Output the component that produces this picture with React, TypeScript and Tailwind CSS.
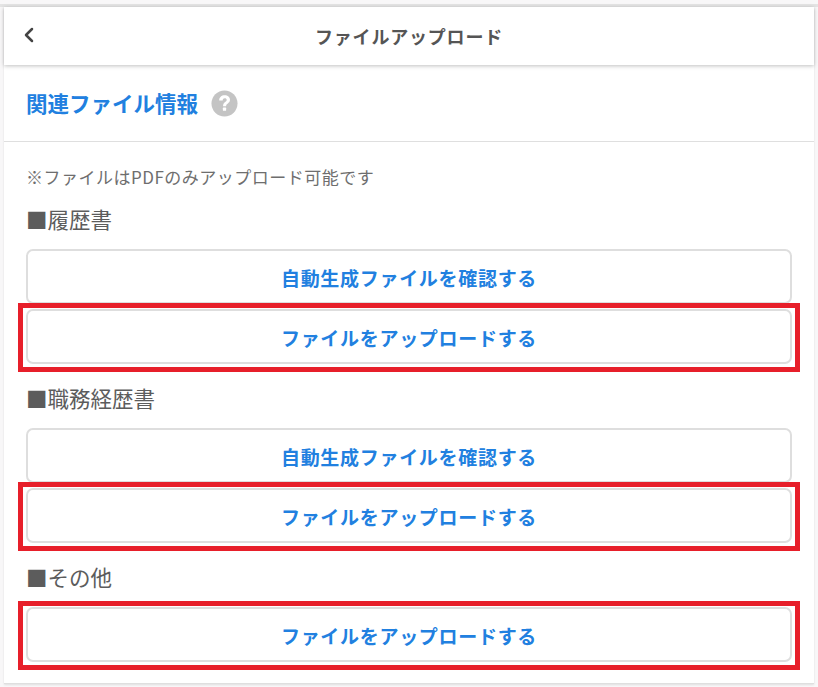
import { ChevronLeft } from "lucide-react";

const FONT = "font-['Noto_Sans_CJK_JP','Noto_Sans',sans-serif]";

function FileButton({ label }: { label: string }) {
  return (
    <button
      type="button"
      className="flex h-[55px] w-full items-center justify-center rounded-[7px] border-2 border-[#dedede] bg-white pt-[3px] text-[19px] font-bold tracking-[0.7px] text-[#2180e0]"
    >
      {label}
    </button>
  );
}

function UploadButton() {
  return (
    <div className="relative">
      <FileButton label="ファイルをアップロードする" />
      <div className="pointer-events-none absolute -inset-x-[8px] -top-[6px] -bottom-[8px] border-[5px] border-[#e71f2a]" />
    </div>
  );
}

function FileSection({ title, auto }: { title: string; auto: boolean }) {
  return (
    <section className="flex flex-col">
      <h3 className="mb-[16px] h-[28px] text-[21.5px] leading-[28px] font-normal text-[#5c5c5c]">■{title}</h3>
      {auto && (
        <div className="mb-[5px]">
          <FileButton label="自動生成ファイルを確認する" />
        </div>
      )}
      <UploadButton />
    </section>
  );
}

export default function App() {
  return (
    <div className={`${FONT} h-[687px] w-[818px] overflow-hidden bg-[#f8f7f8] pt-[4px]`}>
      <div className="h-[3px] bg-[#e4e4e4]" />
      <div className="mx-[4px] bg-white shadow-[0_1px_2px_rgba(0,0,0,0.1)]">
        <header className="relative flex h-[58px] items-center justify-center bg-white shadow-[0_1px_4px_rgba(0,0,0,0.25)]">
          <ChevronLeft className="absolute left-[13px] top-[16px] h-[24px] w-[24px] text-[#444444]" strokeWidth={2.5} />
          <h1 className="text-[18px] font-bold tracking-[0.8px] text-[#555555]">ファイルアップロード</h1>
        </header>
        <div className="flex h-[77px] items-center gap-[13px] border-b border-[#dfdfdf] pl-[22px]">
          <h2 className="text-[21.5px] font-bold text-[#2180e0]">関連ファイル情報</h2>
          <svg viewBox="0 0 28 28" className="h-[27px] w-[27px]">
            <circle cx="14" cy="14" r="13.5" fill="#c4c4c4" />
            <path
              d="M8.5 10.8c0-3.2 2.3-5.3 5.7-5.3 3.2 0 5.5 1.9 5.5 4.7 0 2-1.1 3-2.5 4-1.1.8-1.5 1.2-1.5 2.6h-3.2c0-2.3.7-3.3 2.2-4.4 1-.7 1.6-1.2 1.6-2.1 0-1-.8-1.7-2-1.7-1.3 0-2.1.9-2.2 2.4z"
              fill="#ffffff"
            />
            <rect x="12.3" y="18.2" width="3.4" height="3.4" rx="0.6" fill="#ffffff" />
          </svg>
        </div>
        <div className="h-[542px] border-b border-[#dfdfdf] px-[22px] pt-[23px]">
          <p className="mb-[16px] h-[24px] text-[17px] leading-[24px] tracking-[0.5px] text-[#6e6e6e]">
            ※ファイルはPDFのみアップロード可能です
          </p>
          <div className="flex flex-col gap-[20px]">
            <FileSection title="履歴書" auto />
            <FileSection title="職務経歴書" auto />
            <FileSection title="その他" auto={false} />
          </div>
        </div>
      </div>
    </div>
  );
}
